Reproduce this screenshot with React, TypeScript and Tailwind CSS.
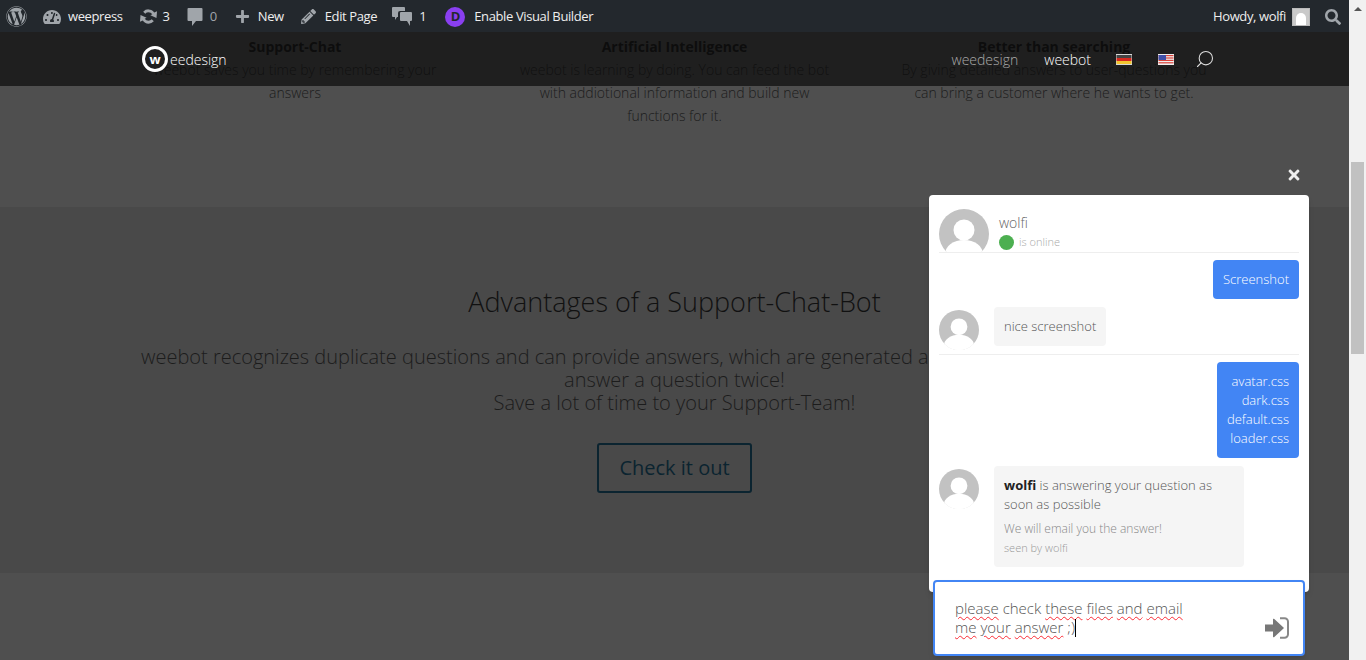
import { FaWordpress, FaTachometerAlt, FaPlus, FaPencilAlt, FaSearch, FaTimes } from "react-icons/fa";
import { Search } from "lucide-react";

const FONT = "font-['Open_Sans','Noto_Sans',sans-serif]";

function Avatar({ size }: { size: string }) {
  return (
    <svg viewBox="0 0 50 50" className={`${size} shrink-0`}>
      <defs>
        <clipPath id="avatar-circle">
          <circle cx="25" cy="25" r="25" />
        </clipPath>
      </defs>
      <g clipPath="url(#avatar-circle)">
        <rect width="50" height="50" fill="#c2c2c2" />
        <circle cx="25" cy="21" r="10.5" fill="#fff" />
        <ellipse cx="25" cy="45" rx="19" ry="14" fill="#fff" />
        <rect y="44" width="50" height="6" fill="#fff" />
      </g>
    </svg>
  );
}

function UpdateIcon() {
  return (
    <svg viewBox="0 0 20 20" className="h-[19px] w-[19px] fill-[#a0a5aa]">
      <path d="M10 2.5c2.6 0 4.8 1.3 6 3.3L19 4.5 18.4 11.5 12 8.7l2-1a5 5 0 0 0-4-2.2A4.7 4.7 0 0 0 6.6 7L4.4 4.9A7.7 7.7 0 0 1 10 2.5z" />
      <path d="M10 17.5c-2.6 0-4.8-1.3-6-3.3L1 15.5 1.6 8.5 8 11.3l-2 1a5 5 0 0 0 4 2.2c1.3 0 2.5-.5 3.4-1.5l2.2 2.1A7.7 7.7 0 0 1 10 17.5z" />
    </svg>
  );
}

function CommentIcon({ className }: { className: string }) {
  return (
    <svg viewBox="0 0 16 20" className={className}>
      <path d="M1.5 1h13a1 1 0 0 1 1 1v11a1 1 0 0 1-1 1H9l-4 5v-5H1.5a1 1 0 0 1-1-1V2a1 1 0 0 1 1-1z" />
    </svg>
  );
}

function CommentsIcon() {
  return (
    <svg viewBox="0 0 20 19" className="h-[19px] w-5 fill-[#a0a5aa]">
      <path d="M1 0h11a1 1 0 0 1 1 1v3H8a2 2 0 0 0-2 2v4H5l-2 3v-3H1a1 1 0 0 1-1-1V1a1 1 0 0 1 1-1z" />
      <path d="M9 5h10a1 1 0 0 1 1 1v7a1 1 0 0 1-1 1h-1v5l-3-5H9a1 1 0 0 1-1-1V6a1 1 0 0 1 1-1z" />
    </svg>
  );
}

function SendIcon() {
  return (
    <svg viewBox="0 0 24 22" className="h-[22px] w-6 shrink-0">
      <path d="M0 7.5h8v-5a.8.8 0 0 1 1.3-.6l9.2 8.5a.8.8 0 0 1 0 1.2l-9.2 8.5a.8.8 0 0 1-1.3-.6v-5H0z" fill="#777" />
      <path d="M15 1.2h4.5a3.5 3.5 0 0 1 3.5 3.5v12.6a3.5 3.5 0 0 1-3.5 3.5H15" fill="none" stroke="#888" strokeWidth="2" />
    </svg>
  );
}

function FlagDe() {
  return (
    <svg viewBox="0 0 16 11" className="h-[11px] w-4">
      <rect width="16" height="11" fill="#d8d8d8" />
      <rect x="0.5" y="1" width="15" height="3" fill="#444" />
      <rect x="0.5" y="4" width="15" height="3" fill="#d8281e" />
      <rect x="0.5" y="7" width="15" height="3" fill="#f2c530" />
    </svg>
  );
}

function FlagUs() {
  return (
    <svg viewBox="0 0 16 11" className="h-[11px] w-4">
      <rect width="16" height="11" fill="#eee" />
      <rect x="0.5" y="1" width="15" height="1.2" fill="#d9423a" />
      <rect x="0.5" y="3.4" width="15" height="1.2" fill="#d9423a" />
      <rect x="0.5" y="5.8" width="15" height="1.2" fill="#d9423a" />
      <rect x="0.5" y="8.2" width="15" height="1.2" fill="#d9423a" />
      <rect x="0.5" y="1" width="7.5" height="5" fill="#3f4fa8" />
    </svg>
  );
}

function Feature({ title, lines }: { title: string; lines: string[] }) {
  return (
    <div className="w-[352px] text-center">
      <h4 className="text-[14px] leading-[23px] font-bold text-[#111]">{title}</h4>
      {lines.map((line) => (
        <p key={line} className="text-[14px] leading-[23px] font-light whitespace-nowrap text-[#1c1c1c]">
          {line}
        </p>
      ))}
    </div>
  );
}

function Misspelled({ children }: { children: string }) {
  return <span className="underline decoration-red-500 decoration-wavy decoration-1 underline-offset-2">{children}</span>;
}

export default function App() {
  return (
    <div className={`flex h-[660px] w-[1366px] overflow-hidden ${FONT}`}>
      <div className="relative flex w-[1349px] flex-col">
        {/* WP admin bar */}
        <div className="z-20 flex h-8 shrink-0 items-center bg-[#23282d] pt-px text-[13px] tracking-[-0.38px] text-[#eee]">
          <FaWordpress className="ml-[6px] h-[21px] w-[21px] text-[#a0a5aa]" />
          <FaTachometerAlt className="ml-4 h-[18px] w-[18px] text-[#a0a5aa]" />
          <span className="ml-[7px]">weepress</span>
          <span className="ml-4"><UpdateIcon /></span>
          <span className="ml-[5px]">3</span>
          <CommentIcon className="ml-[17px] h-5 w-4 fill-[#a0a5aa]" />
          <span className="ml-[7px] text-[#a0a5aa]">0</span>
          <FaPlus className="ml-[18px] h-[15px] w-[15px] text-[#a0a5aa]" />
          <span className="ml-2">New</span>
          <FaPencilAlt className="ml-[17px] h-[15px] w-[15px] text-[#a0a5aa]" />
          <span className="ml-[9px]">Edit Page</span>
          <span className="ml-[15px]"><CommentsIcon /></span>
          <span className="ml-[7px]">1</span>
          <span className="ml-[19px] flex h-[20px] w-[20px] items-center justify-center rounded-full bg-[#8a3ff0] text-[13px] leading-none font-bold text-[#23282d]">
            D
          </span>
          <span className="ml-[9px]">Enable Visual Builder</span>
          <span className="ml-auto">Howdy, wolfi</span>
          <div className="ml-[6px] flex h-[18px] w-[18px] items-end justify-center overflow-hidden border border-[#bbb] bg-[#c9c9c9]">
            <div className="h-[12px] w-[10px] rounded-t-full bg-white" />
          </div>
          <FaSearch className="mr-2 ml-[15px] h-4 w-4 text-[#a0a5aa]" />
        </div>

        {/* Main nav, over the page content */}
        <div className="absolute top-8 left-0 z-10 flex h-[54px] w-full items-center bg-[#0b0b0b]/70 pr-[134px] pl-[142px]">
          <div className="flex h-[26px] w-[26px] items-center justify-center rounded-full border-[3px] border-white bg-[#1f1f1f] text-[13px] leading-none font-bold text-white">
            w
          </div>
          <span className="ml-[2px] text-[14px] font-light text-white">eedesign</span>
          <span className="ml-auto text-[14px] font-light text-[#aaa]">weedesign</span>
          <span className="ml-[26px] text-[14px] font-light text-white">weebot</span>
          <span className="ml-[25px]"><FlagDe /></span>
          <span className="ml-[26px]"><FlagUs /></span>
          <Search strokeWidth={1.3} className="ml-[21px] h-5 w-5 -scale-x-100 text-[#ddd]" />
        </div>

        {/* Features */}
        <section className="flex h-[175px] shrink-0 justify-between bg-[#4f4f4f] px-[119px] pt-[3px]">
          <Feature title="Support-Chat" lines={["weebot saves you time by remembering your", "answers"]} />
          <Feature
            title="Artificial Intelligence"
            lines={["weebot is learning by doing. You can feed the bot", "with addiotional information and build new", "functions for it."]}
          />
          <Feature
            title="Better than searching"
            lines={["By giving detailed answers to user-questions you", "can bring a customer where he wants to get."]}
          />
        </section>

        {/* Advantages */}
        <section className="flex h-[366px] shrink-0 flex-col items-center bg-[#494949] pt-[77px]">
          <h2 className="text-[27px] leading-9 font-light text-[#111]">Advantages of a Support-Chat-Bot</h2>
          <p className="mt-[25px] text-center text-[20px] leading-[23px] font-light whitespace-nowrap text-[#1c1c1c]">
            weebot recognizes duplicate questions and can provide answers, which are generated automatically. You don't have to!
            <br />
            answer a question twice!
            <br />
            Save a lot of time to your Support-Team!
          </p>
          <button className="mt-[29px] h-[50px] w-[155px] rounded-[3px] border-2 border-[#0b2430] text-[20px] text-[#0b2430]">
            Check it out
          </button>
        </section>

        <section className="flex-1 bg-[#4f4f4f]" />

        {/* Chat widget */}
        <div className="absolute top-[167px] left-[929px] z-30 w-[380px]">
          <div className="flex justify-end pr-[7px] pb-[12px] text-[#eee]">
            <FaTimes className="h-[16px] w-[16px]" />
          </div>
          <div className="h-[397px] rounded-[4px] bg-white px-[10px] pt-[14px] shadow-md">
            <div className="flex h-[44px] gap-[10px] border-b border-[#eee]">
              <div className="h-[43px] overflow-hidden"><Avatar size="h-[50px] w-[50px]" /></div>
              <div>
                <div className="text-[14px] leading-[28px] font-light text-[#666]">wolfi</div>
                <div className="-mt-[3px] flex items-center gap-[5px] text-[11px] font-light text-[#aaa]">
                  <span className="h-[15px] w-[15px] rounded-full bg-[#4caf50]" />
                  is online
                </div>
              </div>
            </div>
            <div className="mt-[7px] flex justify-end">
              <div className="rounded-[4px] bg-[#4285f4] px-[10px] py-[10px] text-[13px] leading-[19px] font-light text-white">
                Screenshot
              </div>
            </div>
            <div className="mt-2 flex h-[48px] gap-[15px] border-b border-[#eee]">
              <div className="mt-[3px] h-[40px]"><Avatar size="h-10 w-10" /></div>
              <div className="h-[39px] rounded-[4px] bg-[#f5f5f5] px-[10px] py-[10px] text-[13px] leading-[19px] font-light text-[#555]">
                nice screenshot
              </div>
            </div>
            <div className="mt-[7px] flex justify-end">
              <div className="rounded-[4px] bg-[#4285f4] px-[10px] py-[10px] text-right text-[13px] leading-[19px] font-light text-white">
                avatar.css
                <br />
                dark.css
                <br />
                default.css
                <br />
                loader.css
              </div>
            </div>
            <div className="mt-2 flex gap-[15px]">
              <div className="mt-[3px]"><Avatar size="h-10 w-10" /></div>
              <div className="h-[101px] w-[250px] rounded-[4px] bg-[#f5f5f5] px-[10px] py-[10px] font-light">
                <p className="text-[13px] leading-[19px] text-[#555]">
                  <b className="font-bold text-[#222]">wolfi</b> is answering your question as soon as possible
                </p>
                <p className="mt-[5px] text-[12px] leading-[19px] text-[#888]">We will email you the answer!</p>
                <p className="text-[11px] leading-[19px] text-[#999]">seen by wolfi</p>
              </div>
            </div>
          </div>
          <div className="mx-1 -mt-[12px] flex h-[76px] items-start justify-between rounded-[4px] border-2 border-[#4285f4] bg-white pt-[17px] pr-[14px] pl-5 shadow-md">
            <p className="text-[15px] leading-[19px] font-light whitespace-nowrap text-[#555]">
              <Misspelled>please</Misspelled> check <Misspelled>these</Misspelled> <Misspelled>files</Misspelled>{" "}
              <Misspelled>and</Misspelled> <Misspelled>email</Misspelled>
              <br />
              <Misspelled>me</Misspelled> <Misspelled>your</Misspelled> <Misspelled>answer</Misspelled> ;)
              <span className="inline-block h-[18px] w-px bg-black align-text-bottom" />
            </p>
            <div className="mt-[18px]"><SendIcon /></div>
          </div>
        </div>
      </div>

      {/* Scrollbar */}
      <div className="flex w-[17px] shrink-0 flex-col items-center bg-[#f1f1f1]">
        <div className="mt-[7px] h-0 w-0 border-x-[4px] border-b-[4px] border-x-transparent border-b-[#555]" />
        <div className="mt-[151px] h-[192px] w-[13px] bg-[#c1c1c1]" />
      </div>
    </div>
  );
}
